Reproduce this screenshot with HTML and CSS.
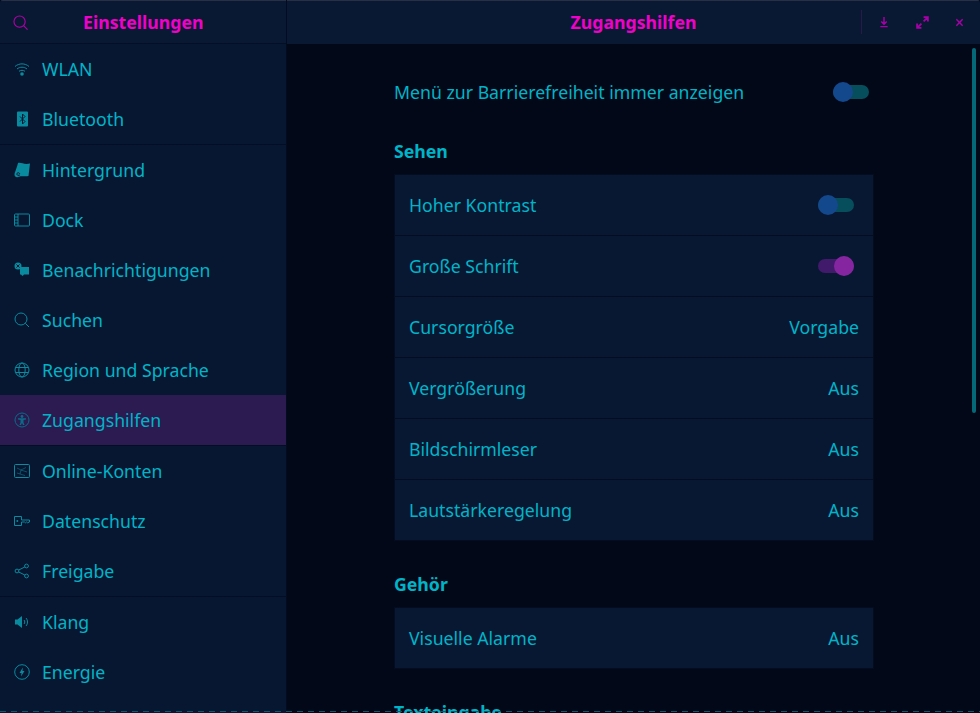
FILE: index.html
```html
<!DOCTYPE html>
<html lang="de">
<head>
<meta charset="utf-8">
<title>Einstellungen</title>
<link rel="stylesheet" href="styles.css">
</head>
<body>
<div class="window">
  <aside class="sidebar">
    <header class="side-head">
      <svg class="head-search" viewBox="0 0 16 16"><circle cx="7" cy="7" r="6"/><path d="M11.300 11.300 15.500 15.500"/></svg>
      <h1 class="head-title">Einstellungen</h1>
    </header>
    <nav class="nav">
      <div class="nav-group">
        <div class="nav-item"><svg class="ico" viewBox="0 0 16 16"><path class="ln" d="M1 5.500C5 2 11 2 15 5.500M3 8c3-2.400 7-2.400 10 0M5 10.300c1.800-1.300 4.200-1.300 6 0"/><circle class="fl" cx="8" cy="13" r="1.800"/></svg><span>WLAN</span></div>
        <div class="nav-item"><svg class="ico" viewBox="0 0 16 16"><rect class="fl" x="3" y="0.500" width="11" height="15" rx="1"/><path class="cut" d="M6 5.500 11 10.500 8.500 13V3L11 5.500 6 10.500"/></svg><span>Bluetooth</span></div>
      </div>
      <div class="nav-group">
        <div class="nav-item"><svg class="ico" viewBox="0 0 16 16"><path class="fl" d="M4 1C7 0 10 3 16 1.500L14.500 14C11 15 8 13.500 5 14.800 2.500 16 0 14.500 0.500 12 1 10 3 5 4 1Z"/><path class="cut" d="M5.500 13.500C3 14 2 11.500 3.800 10.800 5.500 10.300 6.300 12.300 4.800 12.500"/></svg><span>Hintergrund</span></div>
        <div class="nav-item"><svg class="ico" viewBox="0 0 16 16"><rect class="ln" x="0.500" y="2" width="15" height="12" rx="1"/><path class="ln" d="M4 2V14M0.500 5H4M0.500 8H4M0.500 11H4"/></svg><span>Dock</span></div>
        <div class="nav-item"><svg class="ico" viewBox="0 0 16 16"><path class="fl" d="M6 5H15V12.500H10L8.500 14 7 12.500H6Z"/><circle class="fl" cx="4" cy="4" r="3.500"/><path class="cut" d="M2.500 2.500 5.500 5.500M5.500 2.500 2.500 5.500"/></svg><span>Benachrichtigungen</span></div>
        <div class="nav-item"><svg class="ico" viewBox="0 0 16 16"><circle class="ln" cx="7" cy="7" r="6"/><path class="ln" d="M11.300 11.300 15 15"/></svg><span>Suchen</span></div>
        <div class="nav-item"><svg class="ico" viewBox="0 0 16 16"><circle class="ln" cx="8" cy="8" r="7"/><ellipse class="ln" cx="8" cy="8" rx="3.200" ry="7"/><path class="ln" d="M1.500 5.500H14.500M1.500 10.500H14.500"/></svg><span>Region und Sprache</span></div>
        <div class="nav-item is-active"><svg class="ico ico-dim" viewBox="0 0 16 16"><circle class="ln" cx="8" cy="8" r="7"/><circle class="fl" cx="8" cy="4.500" r="1.400"/><path class="fl" d="M4 6.300H12V7.500L9.500 8V10.500L10.500 13H9L8 11 7 13H5.500L6.500 10.500V8L4 7.500Z"/></svg><span>Zugangshilfen</span></div>
      </div>
      <div class="nav-group">
        <div class="nav-item"><svg class="ico" viewBox="0 0 16 16"><rect class="ln" x="0.500" y="1.500" width="15" height="13" rx="1"/><path class="thin" d="M3 5 7 7 12 4.500M7 7 6 11 11 12.500M3 10 6 11M7 7 13 9"/></svg><span>Online-Konten</span></div>
        <div class="nav-item"><svg class="ico" viewBox="0 0 16 16"><path class="ln" d="M0.500 3.500H7.500V7H15.500V9L13.500 9.800 12.500 9 11.500 9.800 10.500 9H7.500V12.500H0.500Z"/><circle class="fl" cx="3.300" cy="8" r="1"/></svg><span>Datenschutz</span></div>
        <div class="nav-item"><svg class="ico" viewBox="0 0 16 16"><circle class="ln" cx="3" cy="8" r="1.900"/><circle class="ln" cx="12.500" cy="3" r="1.900"/><circle class="ln" cx="12.500" cy="13" r="1.900"/><path class="ln" d="M4.700 7 10.800 4M4.700 9 10.800 12"/></svg><span>Freigabe</span></div>
      </div>
      <div class="nav-group">
        <div class="nav-item"><svg class="ico" viewBox="0 0 16 16"><path class="fl" d="M1 5.500H3.500L8 2V14L3.500 10.500H1Z"/><path class="ln" d="M10 6C11 7.200 11 8.800 10 10M12 4C14 6.300 14 9.700 12 12"/></svg><span>Klang</span></div>
        <div class="nav-item"><svg class="ico" viewBox="0 0 16 16"><circle class="ln" cx="8" cy="8" r="7.300"/><path class="fl" d="M8.800 3.500 5.500 9H7.500L7 12.500 10.500 7H8.500Z"/></svg><span>Energie</span></div>
      </div>
    </nav>
  </aside>
  <main class="main">
    <header class="main-head">
      <h2 class="head-title main-title">Zugangshilfen</h2>
      <div class="win-controls">
        <svg class="ctl" viewBox="0 0 10 12"><path d="M5 0V8M2 5 5 8 8 5M1 10.500H9"/></svg>
        <svg class="ctl" viewBox="0 0 12 12"><path d="M7 5 10.500 1.500M7 1H11V5M5 7 1.500 10.500M1 7V11H5"/></svg>
        <svg class="ctl" viewBox="0 0 10 10"><path d="M1.500 1.500 8.500 8.500M8.500 1.500 1.500 8.500"/></svg>
      </div>
    </header>
    <div class="scroll">
      <div class="column">
        <div class="top-row">
          <span>Menü zur Barrierefreiheit immer anzeigen</span>
          <span class="toggle toggle-off"><i class="knob"></i></span>
        </div>
        <h3 class="section section-first">Sehen</h3>
        <div class="list">
          <div class="row"><span>Hoher Kontrast</span><span class="toggle toggle-off"><i class="knob"></i></span></div>
          <div class="row"><span>Große Schrift</span><span class="toggle toggle-on"><i class="knob"></i></span></div>
          <div class="row"><span>Cursorgröße</span><span>Vorgabe</span></div>
          <div class="row"><span>Vergrößerung</span><span>Aus</span></div>
          <div class="row"><span>Bildschirmleser</span><span>Aus</span></div>
          <div class="row"><span>Lautstärkeregelung</span><span>Aus</span></div>
        </div>
        <h3 class="section section-next">Gehör</h3>
        <div class="list">
          <div class="row"><span>Visuelle Alarme</span><span>Aus</span></div>
        </div>
        <h3 class="section section-next">Texteingabe</h3>
      </div>
    </div>
    <div class="scrollbar"></div>
  </main>
  <div class="dash"></div>
</div>
</body>
</html>
```

FILE: styles.css
```css
* { box-sizing: border-box; }
html, body { margin: 0; height: 100%; background: #020817; overflow: hidden; }
body { font-family: "Noto Sans", sans-serif; font-size: 17.700px; color: #00b4c8; }
h1, h2, h3 { margin: 0; }
.window { position: relative; display: flex; width: 980px; height: 713px; overflow: hidden; border-radius: 3px 3px 0 0; background: #020817; }
.sidebar { display: flex; flex-direction: column; flex: none; width: 287px; height: 713px; background: #071731; border-right: 1px solid #030c1e; }
.side-head { display: flex; align-items: center; flex: none; height: 44px; padding: 1px 0 0 13px; background: #091933; border-top: 1px solid #2a3044; border-bottom: 1px solid #050f24; }
.head-search { flex: none; width: 15px; height: 15px; fill: none; stroke: #b000a8; stroke-width: 1.200; }
.head-title { font-size: 17.700px; font-weight: 700; color: #f000c8; line-height: 1; }
.side-head .head-title { margin-left: 55px; }
.nav { flex: 1; min-height: 0; }
.nav-group { border-bottom: 1px solid #040e22; }
.nav-group:last-child { border-bottom: 0; }
.nav-item { display: flex; align-items: center; gap: 12px; height: 50px; padding: 0 0 0 14px; }
.is-active { background: #2c1b51; }
.ico { flex: none; width: 16px; height: 16px; color: #0a8a9e; }
.ico-dim { color: #0c6a88; }
.ln { fill: none; stroke: currentColor; stroke-width: 1; }
.fl { fill: currentColor; stroke: none; }
.thin { fill: none; stroke: currentColor; stroke-width: 0.500; }
.cut { fill: none; stroke: #071731; stroke-width: 1; }
.main { position: relative; display: flex; flex-direction: column; flex: 1; min-width: 0; }
.main-head { position: relative; display: flex; align-items: center; justify-content: center; flex: none; height: 44px; background: #091933; border-top: 1px solid #2a3044; }
.win-controls { position: absolute; top: 9px; right: 0; display: flex; align-items: center; justify-content: space-between; width: 119px; height: 24px; padding: 0 16px 0 17px; border-left: 1px solid #2a1a4a; }
.ctl { width: 10px; height: 11px; fill: none; stroke: #a800a8; stroke-width: 1.600; }
.ctl:nth-child(2) { width: 13px; height: 13px; }
.ctl:nth-child(3) { width: 9px; height: 9px; }
.scroll { flex: 1; min-height: 0; overflow: hidden; }
.column { width: 480px; margin-left: 107px; padding-top: 18px; }
.top-row { display: flex; align-items: center; justify-content: space-between; height: 60px; padding-right: 5px; }
.section { height: 24px; font-size: 17.700px; font-weight: 700; line-height: 24px; }
.section-first { margin-top: 17px; margin-bottom: 11px; }
.section-next { margin-top: 31px; margin-bottom: 11px; }
.list { background: #081833; border: 1px solid #040c1f; border-bottom-width: 0; }
.row { display: flex; align-items: center; justify-content: space-between; height: 61px; padding: 0 14px; border-bottom: 1px solid #040d20; }
.row .toggle { margin-right: 5px; }
.toggle { position: relative; display: block; flex: none; width: 36px; height: 14px; border-radius: 7px; }
.knob { position: absolute; top: -3px; width: 20px; height: 20px; border-radius: 50%; }
.toggle-off { background: #064e5c; }
.toggle-off .knob { left: 0; background: #14488c; }
.toggle-on { background: #421a6c; }
.toggle-on .knob { right: 0; background: #8526a0; }
.scrollbar { position: absolute; top: 48px; right: 4px; width: 4px; height: 365px; border-radius: 2px; background: #046878; }
.dash { position: absolute; left: 0; right: 0; bottom: 1px; height: 1px; background: repeating-linear-gradient(90deg, #0b5a6c 0 6px, transparent 6px 11px); }
```
